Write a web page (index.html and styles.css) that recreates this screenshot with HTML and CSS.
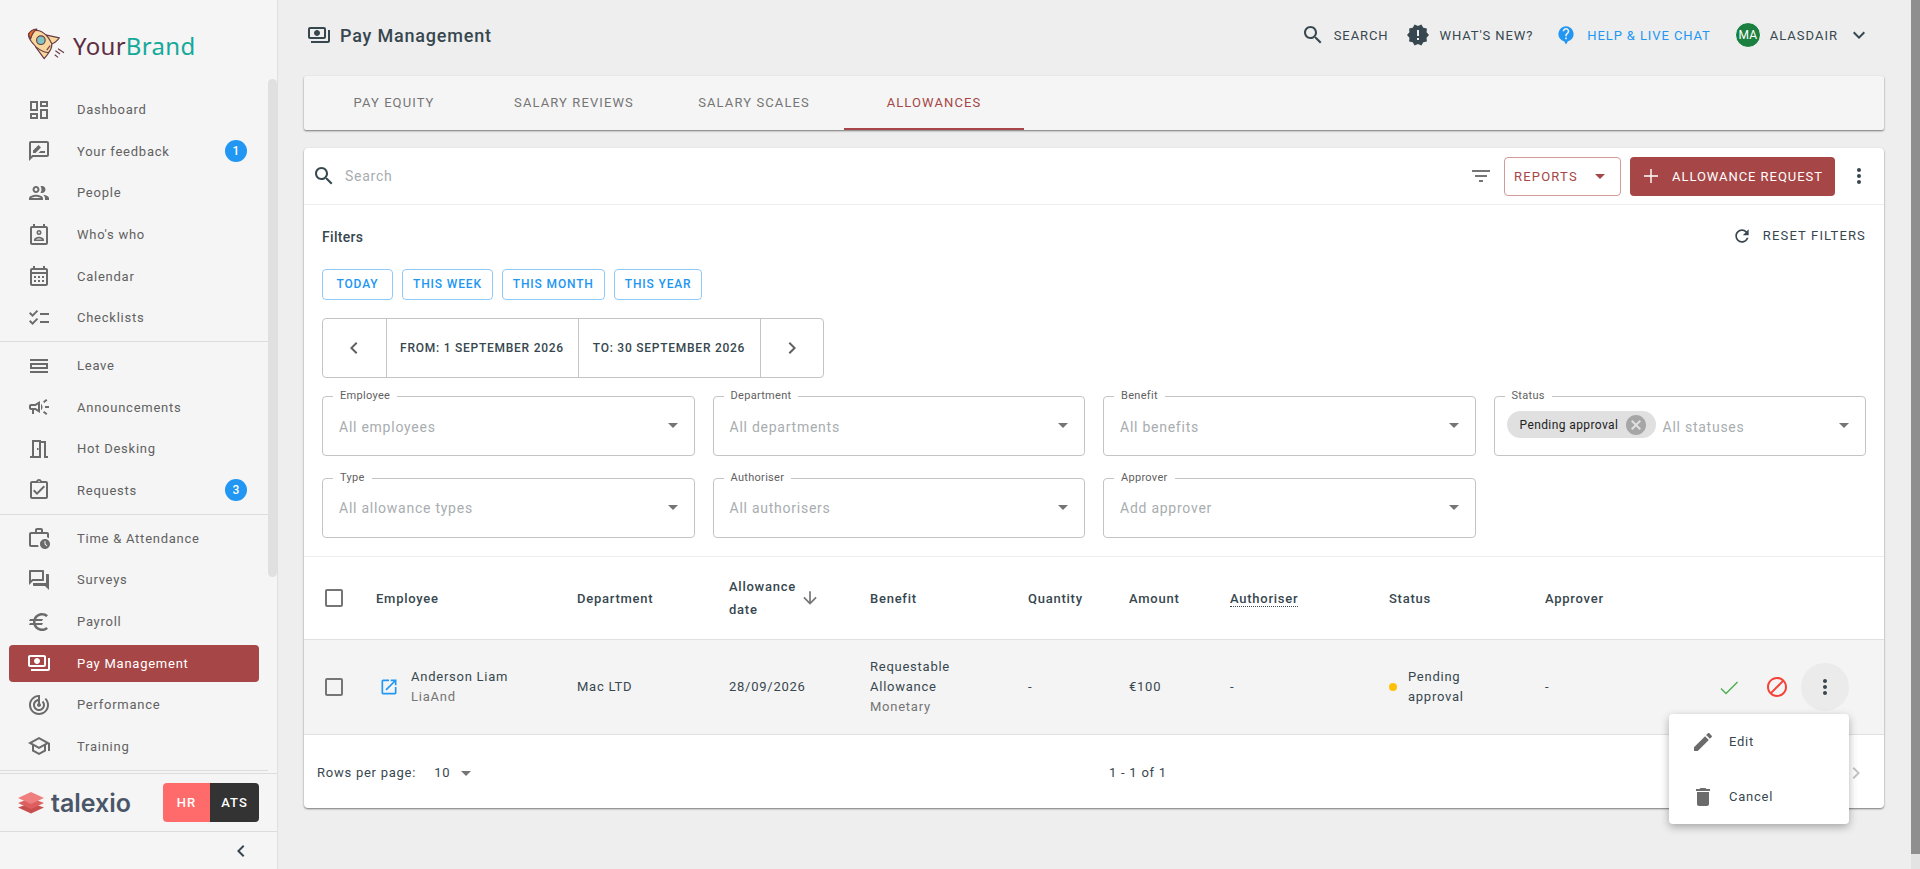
FILE: index.html
```html
<!DOCTYPE html>
<html lang="en">
<head>
    <meta charset="UTF-8">
    <meta name="viewport" content="width=device-width, initial-scale=1.0">
    <title>Pay Management</title>
    <link rel="stylesheet" href="styles.css">
</head>
<body>
    <svg class="sprite" xmlns="http://www.w3.org/2000/svg">
        <symbol id="i-dashboard" viewBox="0 0 24 24"><path d="M19 5v2h-4V5h4M9 5v6H5V5h4m10 8v6h-4v-6h4M9 17v2H5v-2h4M21 3h-8v6h8V3zM11 3H3v10h8V3zm10 8h-8v10h8V11zm-10 4H3v6h8v-6z"/></symbol>
        <symbol id="i-feedback" viewBox="0 0 24 24"><path d="M20 2H4c-1.1 0-2 .9-2 2v18l4-4h14c1.1 0 2-.9 2-2V4c0-1.100-.9-2-2-2zm0 14H5.170L4 17.170V4h16v12z"/><path d="M6 14h2.500l5.500-5.500-2.500-2.500-5.500 5.500V14zM11.500 14H18v-2h-4.500z"/></symbol>
        <symbol id="i-people" viewBox="0 0 24 24"><path d="M9 13.750c-2.340 0-7 1.170-7 3.500V19h14v-1.750c0-2.330-4.660-3.500-7-3.500zM4.340 17c.84-.58 2.870-1.250 4.660-1.250s3.820.67 4.660 1.250H4.340zM9 12c1.930 0 3.500-1.570 3.500-3.500S10.930 5 9 5 5.500 6.570 5.500 8.500 7.070 12 9 12zm0-5c.83 0 1.500.67 1.500 1.500S9.830 10 9 10s-1.500-.67-1.500-1.500S8.170 7 9 7zm7.040 6.810c1.160.84 1.960 1.960 1.960 3.440V19h4v-1.750c0-2.020-3.500-3.170-5.960-3.440zM15 12c1.930 0 3.500-1.570 3.500-3.500S16.930 5 15 5c-.54 0-1.040.13-1.500.35.63.89 1 1.980 1 3.150s-.37 2.260-1 3.150c.46.22.96.35 1.500.35z"/></symbol>
        <symbol id="i-whos" viewBox="0 0 24 24"><path d="M19 3h-1V1h-2v2H8V1H6v2H5c-1.100 0-2 .9-2 2v15c0 1.100.9 2 2 2h14c1.100 0 2-.9 2-2V5c0-1.100-.9-2-2-2zm0 17H5V5h14v15z"/><path d="M12 7a2.500 2.500 0 1 0 0 5 2.500 2.500 0 0 0 0-5zm0 3.400a.9.9 0 1 1 0-1.800.9.9 0 0 1 0 1.800zM7 18h10v-1.300c0-1.900-3.300-2.900-5-2.900s-5 1-5 2.900V18zm2-1.600c.6-.6 2-1 3-1s2.400.4 3 1H9z"/></symbol>
        <symbol id="i-calendar" viewBox="0 0 24 24"><path d="M19 4h-1V2h-2v2H8V2H6v2H5c-1.100 0-2 .9-2 2v14c0 1.100.9 2 2 2h14c1.100 0 2-.9 2-2V6c0-1.100-.9-2-2-2zm0 16H5V10h14v10zM5 8V6h14v2H5z"/><path d="M7 12h2v2H7zM11 12h2v2h-2zM15 12h2v2h-2zM7 16h2v2H7zM11 16h2v2h-2zM15 16h2v2h-2z"/></symbol>
        <symbol id="i-checklist" viewBox="0 0 24 24"><path d="M22 7h-9v2h9V7zm0 8h-9v2h9v-2zM5.540 11L2 7.460l1.410-1.410 2.120 2.120 4.240-4.240 1.410 1.410L5.540 11zm0 8L2 15.460l1.410-1.410 2.120 2.120 4.240-4.240 1.410 1.410L5.540 19z"/></symbol>
        <symbol id="i-leave" viewBox="0 0 24 24"><path d="M3 5h18v2H3zM3 17h18v2H3zM3 9h18v6H3zm2 2v2h14v-2z" fill-rule="evenodd"/></symbol>
        <symbol id="i-campaign" viewBox="0 0 24 24"><path d="M18 11v2h4v-2h-4zm-2 6.610c.96.71 2.210 1.650 3.200 2.390.4-.53.8-1.070 1.200-1.600-.99-.74-2.240-1.680-3.200-2.400-.4.54-.8 1.080-1.200 1.610zM20.400 5.600c-.4-.53-.8-1.070-1.200-1.600-.99.74-2.240 1.680-3.200 2.400.4.53.8 1.070 1.200 1.600.96-.72 2.210-1.650 3.200-2.400zM4 9c-1.100 0-2 .9-2 2v2c0 1.100.9 2 2 2h1v4h2v-4h1l5 3V6L8 9H4zm5.030 1.710L11 9.530v4.940l-1.970-1.180-.48-.29H4v-2h4.550l.48-.29zM15.500 12c0-1.330-.58-2.530-1.500-3.350v6.690c.92-.81 1.500-2.010 1.500-3.340z"/></symbol>
        <symbol id="i-door" viewBox="0 0 24 24"><path d="M14 6v15H3v-2h2V3h9v1h5v15h2v2h-4V6h-3zM7 5v14h5V5H7zm3 6h1.500v2H10z" fill-rule="evenodd"/></symbol>
        <symbol id="i-requests" viewBox="0 0 24 24"><path d="M18 9l-1.410-1.420L10 14.170l-2.590-2.580L6 13l4 4zm1-6h-4.180C14.400 1.840 13.300 1 12 1c-1.300 0-2.400.84-2.820 2H5c-1.100 0-2 .9-2 2v14c0 1.100.9 2 2 2h14c1.100 0 2-.9 2-2V5c0-1.100-.9-2-2-2zm-7-.25c.41 0 .75.34.75.75s-.34.75-.75.75-.75-.34-.75-.75.34-.75.75-.75zM19 19H5V5h14v14z"/></symbol>
        <symbol id="i-time" viewBox="0 0 24 24"><path d="M4 19V8h16v3.290c.72.22 1.400.54 2 .97V8c0-1.110-.89-2-2-2h-4V4c0-1.110-.89-2-2-2h-4c-1.110 0-2 .89-2 2v2H4c-1.110 0-1.990.89-1.990 2L2 19c0 1.110.89 2 2 2h7.680c-.3-.62-.5-1.290-.6-2H4zm6-15h4v2h-4V4z"/><path d="M18 13c-2.760 0-5 2.240-5 5s2.240 5 5 5 5-2.240 5-5-2.240-5-5-5zm1.650 7.350L17.500 18.200V15h1v2.790l1.850 1.850-.7.71z"/></symbol>
        <symbol id="i-forum" viewBox="0 0 24 24"><path d="M15 4v7H5.170L4 12.170V4h11m1-2H3c-.55 0-1 .45-1 1v14l4-4h10c.55 0 1-.45 1-1V3c0-.55-.45-1-1-1zm5 4h-2v9H6v2c0 .55.45 1 1 1h11l4 4V7c0-.55-.45-1-1-1z"/></symbol>
        <symbol id="i-euro" viewBox="0 0 24 24"><path d="M15 18.500c-2.510 0-4.680-1.420-5.760-3.500H15l1-2H8.580c-.05-.33-.08-.66-.08-1s.03-.67.08-1H15l1-2H9.240C10.320 6.920 12.500 5.500 15 5.500c1.610 0 3.090.59 4.230 1.570L21 5.300C19.410 3.870 17.300 3 15 3c-3.920 0-7.240 2.510-8.480 6H3l-1 2h4.060c-.04.33-.06.66-.06 1s.02.67.06 1H3l-1 2h4.520c1.240 3.490 4.560 6 8.480 6 2.310 0 4.410-.87 6-2.300l-1.780-1.770c-1.130.98-2.600 1.570-4.220 1.570z"/></symbol>
        <symbol id="i-payments" viewBox="0 0 24 24"><path d="M19 14V6c0-1.100-.9-2-2-2H3c-1.100 0-2 .9-2 2v8c0 1.100.9 2 2 2h14c1.100 0 2-.9 2-2zm-2 0H3V6h14v8zm-7-7c-1.660 0-3 1.340-3 3s1.340 3 3 3 3-1.340 3-3-1.340-3-3-3zm13 0v11c0 1.100-.9 2-2 2H4v-2h17V7h2z"/></symbol>
        <symbol id="i-track" viewBox="0 0 24 24"><path d="M19.070 4.930l-1.410 1.410C19.100 7.790 20 9.790 20 12c0 4.420-3.580 8-8 8s-8-3.580-8-8c0-4.080 3.050-7.440 7-7.930v2.020C8.160 6.570 6 9.030 6 12c0 3.310 2.690 6 6 6s6-2.690 6-6c0-1.660-.67-3.160-1.760-4.240l-1.410 1.410C15.550 9.900 16 10.890 16 12c0 2.210-1.790 4-4 4s-4-1.790-4-4c0-1.860 1.280-3.410 3-3.860v2.140c-.6.35-1 .98-1 1.720 0 1.100.9 2 2 2s2-.9 2-2c0-.74-.4-1.380-1-1.720V2h-1C6.480 2 2 6.480 2 12s4.480 10 10 10 10-4.480 10-10c0-2.760-1.120-5.260-2.930-7.070z"/></symbol>
        <symbol id="i-school" viewBox="0 0 24 24"><path d="M12 3L1 9l4 2.180v6L12 21l7-3.820v-6l2-1.090V17h2V9L12 3zm6.820 6L12 12.720 5.180 9 12 5.280 18.820 9zM17 15.990l-5 2.730-5-2.730v-3.720L12 15l5-2.730v3.720z"/></symbol>
        <symbol id="i-search" viewBox="0 0 24 24"><path d="M15.500 14h-.79l-.28-.27C15.410 12.590 16 11.110 16 9.500 16 5.910 13.090 3 9.500 3S3 5.910 3 9.500 5.910 16 9.500 16c1.610 0 3.090-.59 4.230-1.570l.27.28v.79l5 4.990L20.490 19l-4.990-5zm-6 0C7.010 14 5 11.990 5 9.500S7.010 5 9.500 5 14 7.010 14 9.500 11.990 14 9.500 14z"/></symbol>
        <symbol id="i-new" viewBox="0 0 24 24"><path d="M23 12l-2.440-2.780.34-3.680-3.610-.82-1.890-3.180L12 3 8.600 1.540 6.710 4.720l-3.610.81.34 3.680L1 12l2.440 2.780-.34 3.690 3.610.82 1.890 3.180L12 21l3.400 1.460 1.890-3.180 3.610-.82-.34-3.680L23 12zm-10 5h-2v-2h2v2zm0-4h-2V7h2v6z"/></symbol>
        <symbol id="i-help" viewBox="0 0 24 24"><path d="M12 1.500a9.200 9.200 0 0 0-2.300 18.100L12 23.500l2.300-3.900A9.200 9.200 0 0 0 12 1.500z"/><path fill="#eeeeee" d="M13 17h-2v-2h2v2zm2.070-7.250l-.9.920C13.450 11.400 13 12 13 13.500h-2V13c0-1.100.45-2.100 1.170-2.830l1.240-1.260c.37-.36.59-.86.59-1.410 0-1.100-.9-2-2-2s-2 .9-2 2H8c0-2.210 1.790-4 4-4s4 1.790 4 4c0 .88-.36 1.680-.93 2.250z"/></symbol>
        <symbol id="i-filter" viewBox="0 0 24 24"><path d="M10 18h4v-2h-4v2zM3 6v2h18V6H3zm3 7h12v-2H6v2z"/></symbol>
        <symbol id="i-refresh" viewBox="0 0 24 24"><path d="M17.650 6.350C16.200 4.900 14.210 4 12 4c-4.420 0-7.990 3.580-7.990 8s3.570 8 7.990 8c3.730 0 6.840-2.550 7.730-6h-2.080c-.82 2.330-3.040 4-5.650 4-3.310 0-6-2.690-6-6s2.690-6 6-6c1.660 0 3.140.69 4.220 1.780L13 11h7V4l-2.350 2.350z"/></symbol>
        <symbol id="i-more" viewBox="0 0 24 24"><path d="M12 8c1.100 0 2-.9 2-2s-.9-2-2-2-2 .9-2 2 .9 2 2 2zm0 2c-1.100 0-2 .9-2 2s.9 2 2 2 2-.9 2-2-.9-2-2-2zm0 6c-1.100 0-2 .9-2 2s.9 2 2 2 2-.9 2-2-.9-2-2-2z"/></symbol>
        <symbol id="i-plus" viewBox="0 0 24 24"><path d="M19 12.700h-6.300V19h-1.400v-6.300H5v-1.400h6.300V5h1.400v6.300H19z"/></symbol>
        <symbol id="i-caret" viewBox="0 0 24 24"><path d="M7 10l5 5 5-5z"/></symbol>
        <symbol id="i-left" viewBox="0 0 24 24"><path d="M15.410 7.410L14 6l-6 6 6 6 1.410-1.410L10.830 12z"/></symbol>
        <symbol id="i-right" viewBox="0 0 24 24"><path d="M10 6L8.590 7.410 13.170 12l-4.580 4.580L10 18l6-6z"/></symbol>
        <symbol id="i-expand" viewBox="0 0 24 24"><path d="M16.590 8.590L12 13.170 7.410 8.590 6 10l6 6 6-6z"/></symbol>
        <symbol id="i-cancel" viewBox="0 0 24 24"><path d="M12 2C6.470 2 2 6.470 2 12s4.470 10 10 10 10-4.470 10-10S17.530 2 12 2zm5 13.590L15.590 17 12 13.410 8.410 17 7 15.590 10.590 12 7 8.410 8.410 7 12 10.590 15.590 7 17 8.410 13.410 12 17 15.590z"/></symbol>
        <symbol id="i-box" viewBox="0 0 24 24"><path d="M19 5v14H5V5h14m0-2H5c-1.100 0-2 .9-2 2v14c0 1.100.9 2 2 2h14c1.100 0 2-.9 2-2V5c0-1.100-.9-2-2-2z"/></symbol>
        <symbol id="i-down" viewBox="0 0 24 24"><path d="M20 12l-1.410-1.410L13 16.170V4h-2v12.170l-5.580-5.590L4 12l8 8 8-8z"/></symbol>
        <symbol id="i-open" viewBox="0 0 24 24"><path d="M19 19H5V5h7V3H5c-1.110 0-2 .9-2 2v14c0 1.100.89 2 2 2h14c1.100 0 2-.9 2-2v-7h-2v7zM14 3v2h3.590l-9.830 9.830 1.410 1.410L19 6.410V10h2V3h-7z"/></symbol>
        <symbol id="i-check" viewBox="0 0 24 24"><path d="M9 17.500L4.500 13l-1 1L9 19.500 21 7.500l-1-1z"/></symbol>
        <symbol id="i-block" viewBox="0 0 24 24"><path d="M12 2C6.480 2 2 6.480 2 12s4.480 10 10 10 10-4.480 10-10S17.520 2 12 2zM4 12c0-4.420 3.580-8 8-8 1.850 0 3.550.63 4.900 1.690L5.690 16.900C4.630 15.550 4 13.850 4 12zm8 8c-1.850 0-3.550-.63-4.900-1.690L18.310 7.100C19.370 8.450 20 10.150 20 12c0 4.420-3.580 8-8 8z"/></symbol>
        <symbol id="i-edit" viewBox="0 0 24 24"><path d="M3 17.250V21h3.750L17.810 9.940l-3.750-3.750L3 17.250zM20.710 7.040c.39-.39.39-1.020 0-1.410l-2.340-2.340c-.39-.39-1.020-.39-1.410 0l-1.830 1.830 3.750 3.750 1.830-1.830z"/></symbol>
        <symbol id="i-delete" viewBox="0 0 24 24"><path d="M6 19c0 1.100.9 2 2 2h8c1.100 0 2-.9 2-2V7H6v12zM19 4h-3.500l-1-1h-5l-1 1H5v2h14V4z"/></symbol>
    </svg>

    <aside class="sidebar">
        <div class="brand">
            <svg class="rocket" viewBox="20 15 115 100">
                <g stroke="#6a3a45" stroke-width="3.500" stroke-linejoin="round">
                    <path d="M76 36 L118 45 C110 55 102 62 92 64z" fill="#f7d79b"/>
                    <path d="M46 72 L72 108 C78 100 84 96 86 88z" fill="#f7d79b"/>
                    <path d="M25 32 C45 12 70 25 85 45 L95 62 C96 74 92 82 85 90 C70 88 50 78 38 62 C28 50 22 40 25 32z" fill="#f7d79b"/>
                    <path d="M25 34 C28 25 38 19 50 18 C40 25 34 35 31 48 C27 42 25 38 25 34z" fill="#f36f1e"/>
                    <circle cx="62" cy="52" r="13" fill="#7fc4c0"/>
                    <path d="M80 82 L90 68" fill="none"/>
                    <path d="M106 84 L120 94 M114 78 L132 90 M104 96 L114 104" fill="none"/>
                </g>
            </svg>
            <span class="brand-name"><span class="brand-your">Your</span><span class="brand-rest">Brand</span></span>
        </div>

        <nav class="nav">
            <ul class="nav-group">
                <li class="nav-item"><svg class="icon"><use href="#i-dashboard"/></svg>Dashboard</li>
                <li class="nav-item"><svg class="icon"><use href="#i-feedback"/></svg>Your feedback<span class="badge">1</span></li>
                <li class="nav-item"><svg class="icon"><use href="#i-people"/></svg>People</li>
                <li class="nav-item"><svg class="icon"><use href="#i-whos"/></svg>Who's who</li>
                <li class="nav-item"><svg class="icon"><use href="#i-calendar"/></svg>Calendar</li>
                <li class="nav-item"><svg class="icon"><use href="#i-checklist"/></svg>Checklists</li>
            </ul>
            <ul class="nav-group">
                <li class="nav-item"><svg class="icon"><use href="#i-leave"/></svg>Leave</li>
                <li class="nav-item"><svg class="icon"><use href="#i-campaign"/></svg>Announcements</li>
                <li class="nav-item"><svg class="icon"><use href="#i-door"/></svg>Hot Desking</li>
                <li class="nav-item"><svg class="icon"><use href="#i-requests"/></svg>Requests<span class="badge">3</span></li>
            </ul>
            <ul class="nav-group">
                <li class="nav-item"><svg class="icon"><use href="#i-time"/></svg>Time &amp; Attendance</li>
                <li class="nav-item"><svg class="icon"><use href="#i-forum"/></svg>Surveys</li>
                <li class="nav-item"><svg class="icon"><use href="#i-euro"/></svg>Payroll</li>
                <li class="nav-item active"><svg class="icon"><use href="#i-payments"/></svg>Pay Management</li>
                <li class="nav-item"><svg class="icon"><use href="#i-track"/></svg>Performance</li>
                <li class="nav-item"><svg class="icon"><use href="#i-school"/></svg>Training</li>
            </ul>
        </nav>
        <div class="nav-thumb"></div>

        <div class="product">
            <div class="talexio">
                <svg class="talexio-mark" viewBox="0 0 26 22">
                    <path d="M13 11 L26 15.500 L13 21.500 L0 15.500z" fill="#c94f4f"/>
                    <path d="M13 6 L26 11 L13 17 L0 11z" fill="#dd5f5f"/>
                    <path d="M13 0 L26 6 L13 12 L0 6z" fill="#ef7f7f"/>
                </svg>
                <span class="talexio-name">talexio</span>
            </div>
            <div class="switch">
                <span class="switch-hr">HR</span>
                <span class="switch-ats">ATS</span>
            </div>
        </div>
        <div class="collapse"><svg class="icon-sm"><use href="#i-left"/></svg></div>
    </aside>

    <main class="main">
        <header class="topbar">
            <div class="page-title"><svg class="title-icon"><use href="#i-payments"/></svg>Pay Management</div>
            <div class="top-actions">
                <span class="top-link"><svg class="top-icon"><use href="#i-search"/></svg>SEARCH</span>
                <span class="top-link whats-new"><svg class="top-icon"><use href="#i-new"/></svg>WHAT'S NEW?</span>
                <span class="top-link help"><svg class="top-icon"><use href="#i-help"/></svg>HELP &amp; LIVE CHAT</span>
                <span class="top-link user"><span class="avatar">MA</span>ALASDAIR<svg class="top-icon"><use href="#i-expand"/></svg></span>
            </div>
        </header>

        <div class="tabs">
            <div class="tab">PAY EQUITY</div>
            <div class="tab">SALARY REVIEWS</div>
            <div class="tab">SALARY SCALES</div>
            <div class="tab selected">ALLOWANCES</div>
        </div>

        <section class="card">
            <div class="toolbar">
                <svg class="toolbar-search"><use href="#i-search"/></svg>
                <span class="search-text">Search</span>
                <svg class="toolbar-filter"><use href="#i-filter"/></svg>
                <button class="btn-reports">REPORTS<svg class="icon-sm"><use href="#i-caret"/></svg></button>
                <button class="btn-primary"><svg class="icon-sm"><use href="#i-plus"/></svg>ALLOWANCE REQUEST</button>
                <svg class="toolbar-more"><use href="#i-more"/></svg>
            </div>

            <div class="filters">
                <div class="filters-head">
                    <span class="filters-title">Filters</span>
                    <span class="reset"><svg class="reset-icon"><use href="#i-refresh"/></svg>RESET FILTERS</span>
                </div>
                <div class="quick">
                    <button class="quick-btn">TODAY</button>
                    <button class="quick-btn">THIS WEEK</button>
                    <button class="quick-btn">THIS MONTH</button>
                    <button class="quick-btn">THIS YEAR</button>
                </div>
                <div class="range">
                    <div class="range-nav"><svg class="icon-sm"><use href="#i-left"/></svg></div>
                    <div class="range-from">FROM: 1 SEPTEMBER 2026</div>
                    <div class="range-to">TO: 30 SEPTEMBER 2026</div>
                    <div class="range-nav"><svg class="icon-sm"><use href="#i-right"/></svg></div>
                </div>
                <div class="selects">
                    <div class="select"><label>Employee</label><span class="placeholder">All employees</span><svg class="caret"><use href="#i-caret"/></svg></div>
                    <div class="select"><label>Department</label><span class="placeholder">All departments</span><svg class="caret"><use href="#i-caret"/></svg></div>
                    <div class="select"><label>Benefit</label><span class="placeholder">All benefits</span><svg class="caret"><use href="#i-caret"/></svg></div>
                    <div class="select with-chip"><label>Status</label><span class="chip">Pending approval<svg class="chip-x"><use href="#i-cancel"/></svg></span><span class="placeholder">All statuses</span><svg class="caret"><use href="#i-caret"/></svg></div>
                    <div class="select"><label>Type</label><span class="placeholder">All allowance types</span><svg class="caret"><use href="#i-caret"/></svg></div>
                    <div class="select"><label>Authoriser</label><span class="placeholder">All authorisers</span><svg class="caret"><use href="#i-caret"/></svg></div>
                    <div class="select"><label>Approver</label><span class="placeholder">Add approver</span><svg class="caret"><use href="#i-caret"/></svg></div>
                </div>
            </div>

            <div class="table-head">
                <div class="cell-check"><svg class="checkbox"><use href="#i-box"/></svg></div>
                <div>Employee</div>
                <div>Department</div>
                <div class="sort"><span>Allowance date</span><svg class="sort-icon"><use href="#i-down"/></svg></div>
                <div>Benefit</div>
                <div>Quantity</div>
                <div>Amount</div>
                <div><span class="dotted">Authoriser</span></div>
                <div>Status</div>
                <div>Approver</div>
                <div></div>
            </div>
            <div class="table-row">
                <div class="cell-check"><svg class="checkbox"><use href="#i-box"/></svg></div>
                <div class="employee">
                    <svg class="open-icon"><use href="#i-open"/></svg>
                    <div><div>Anderson Liam</div><div class="muted">LiaAnd</div></div>
                </div>
                <div>Mac LTD</div>
                <div>28/09/2026</div>
                <div class="benefit">Requestable Allowance<div class="muted">Monetary</div></div>
                <div>-</div>
                <div>€100</div>
                <div>-</div>
                <div class="status"><span class="dot"></span><span>Pending approval</span></div>
                <div>-</div>
                <div class="row-actions">
                    <span class="act"><svg class="act-icon ok"><use href="#i-check"/></svg></span>
                    <span class="act"><svg class="act-icon no"><use href="#i-block"/></svg></span>
                    <span class="act open"><svg class="act-icon"><use href="#i-more"/></svg></span>
                </div>
            </div>
            <div class="pager">
                <div class="pager-rows">Rows per page:<span class="pager-num">10</span><svg class="caret-static"><use href="#i-caret"/></svg></div>
                <div class="pager-count">1 - 1 of 1</div>
                <svg class="pager-next"><use href="#i-right"/></svg>
            </div>

            <div class="menu">
                <div class="menu-item"><svg class="icon"><use href="#i-edit"/></svg>Edit</div>
                <div class="menu-item"><svg class="icon"><use href="#i-delete"/></svg>Cancel</div>
            </div>
        </section>
    </main>

    <div class="page-scroll"><div class="page-thumb"></div></div>
</body>
</html>
```

FILE: styles.css
```css
* {
    box-sizing: border-box;
}

body {
    margin: 0;
    height: 100vh;
    overflow: hidden;
    display: flex;
    background: #eeeeee;
    font-family: Roboto, "Liberation Sans", sans-serif;
    font-size: 13px;
    letter-spacing: 0.75px;
    color: #37474f;
}

button {
    font-family: inherit;
    letter-spacing: inherit;
    cursor: pointer;
}

.sprite {
    display: none;
}

svg {
    fill: currentColor;
    flex-shrink: 0;
}

/* sidebar */
.sidebar {
    position: relative;
    width: 278px;
    flex-shrink: 0;
    display: flex;
    flex-direction: column;
    background: #f5f5f5;
    border-right: 1px solid #e0e0e0;
}

.brand {
    height: 89px;
    display: flex;
    align-items: center;
    padding-left: 27px;
}

.rocket {
    width: 38px;
    height: 33px;
    margin-right: 8px;
}

.brand-name {
    font-family: "Noto Sans", sans-serif;
    font-size: 24px;
    letter-spacing: 0.3px;
    margin-top: 2px;
}

.brand-your {
    color: #5d2e42;
}

.brand-rest {
    color: #14a99a;
}

.nav {
    width: 268px;
}

.nav-group {
    list-style: none;
    display: flex;
    flex-direction: column;
    gap: 4.6px;
    margin: 0 0 2.6px;
    padding: 2.3px 0 5px;
    border-bottom: 1px solid #dcdcdc;
}

.nav-item {
    height: 37px;
    margin: 0 9px;
    padding: 0 12px 0 18px;
    display: flex;
    align-items: center;
    border-radius: 4px;
    color: #616161;
}

.nav-item .icon {
    margin-right: 26px;
}

.icon {
    width: 24px;
    height: 24px;
    color: #6b6b6b;
}

.nav-item.active {
    background: #a64646;
    color: #ffffff;
}

.nav-item.active .icon {
    color: #ffffff;
}

.badge {
    margin-left: auto;
    width: 22px;
    height: 22px;
    border-radius: 50%;
    background: #2196f3;
    color: #ffffff;
    font-size: 12px;
    font-weight: 500;
    letter-spacing: 0;
    display: flex;
    align-items: center;
    justify-content: center;
}

.nav-thumb {
    position: absolute;
    left: 268px;
    top: 79px;
    width: 9px;
    height: 498px;
    background: #e0e0e0;
    border-radius: 5px;
}

.product {
    height: 59px;
    display: flex;
    align-items: center;
    justify-content: space-between;
    padding: 0 18px;
    border-top: 1px solid #dcdcdc;
    border-bottom: 1px solid #dcdcdc;
}

.talexio {
    display: flex;
    align-items: center;
    gap: 7px;
}

.talexio-mark {
    width: 26px;
    height: 22px;
}

.talexio-name {
    font-family: Inter, sans-serif;
    font-size: 25px;
    font-weight: 600;
    letter-spacing: 0;
    color: #4a5568;
}

.switch {
    display: flex;
    width: 96px;
    height: 39px;
    border-radius: 4px;
    overflow: hidden;
    color: #ffffff;
    font-size: 13px;
    font-weight: 500;
    letter-spacing: 1px;
}

.switch span {
    display: flex;
    align-items: center;
    justify-content: center;
}

.switch-hr {
    width: 47px;
    background: #ff6b6b;
}

.switch-ats {
    flex: 1;
    background: #333333;
}

.collapse {
    flex: 1;
    display: flex;
    align-items: center;
    justify-content: flex-end;
    padding-right: 24px;
    color: #37474f;
}

.icon-sm {
    width: 24px;
    height: 24px;
}

/* main */
.main {
    flex: 1;
    min-width: 0;
    padding: 0 27px 0 26px;
}

.topbar {
    height: 76px;
    display: flex;
    align-items: center;
    justify-content: space-between;
    padding: 0 13px 6px 3px;
}

.page-title {
    display: flex;
    align-items: center;
    font-size: 18px;
    font-weight: 500;
    letter-spacing: 0.8px;
}

.title-icon {
    width: 24px;
    height: 24px;
    margin-right: 9px;
}

.top-actions {
    display: flex;
    align-items: center;
    gap: 20px;
}

.top-link {
    display: flex;
    align-items: center;
    font-size: 13px;
    letter-spacing: 0.9px;
}

.top-icon {
    width: 24px;
    height: 24px;
    margin-right: 9px;
}

.whats-new {
    margin-left: -2px;
}

.help {
    margin-left: 1px;
    color: #2196f3;
}

.help .top-icon {
    width: 20px;
    height: 20px;
    margin: 0 11px 0 2px;
}

.user {
    margin-left: 4px;
    letter-spacing: 1px;
}

.user .top-icon {
    margin: 0 0 0 9px;
}

.avatar {
    width: 26px;
    height: 26px;
    border-radius: 50%;
    border: 1px solid #ffffff;
    background: #1b7f3f;
    color: #ffffff;
    font-size: 12px;
    letter-spacing: 0;
    display: flex;
    align-items: center;
    justify-content: center;
    margin-right: 9px;
}

.tabs {
    height: 54px;
    display: flex;
    background: #f5f5f5;
    border-radius: 2px;
    box-shadow: 0 1px 2px rgba(0, 0, 0, 0.5);
    margin-bottom: 18px;
}

.tab {
    width: 180px;
    display: flex;
    align-items: center;
    justify-content: center;
    padding-bottom: 2px;
    color: #757575;
    font-size: 13px;
    letter-spacing: 1.1px;
}

.tab.selected {
    color: #a64646;
    border-bottom: 2px solid #a64646;
    padding-bottom: 0;
}

.card {
    position: relative;
    height: 660px;
    background: #ffffff;
    border-radius: 4px;
    box-shadow: 0 1px 2px rgba(0, 0, 0, 0.5);
}

.toolbar {
    height: 57px;
    display: flex;
    align-items: center;
    padding: 0 13px 0 8px;
    border-bottom: 1px solid #eeeeee;
}

.toolbar-search {
    width: 24px;
    height: 24px;
    margin-right: 9px;
}

.search-text {
    color: #a8adb0;
    font-size: 14px;
}

.toolbar-filter {
    width: 24px;
    height: 24px;
    margin-left: auto;
    margin-right: 11px;
    color: #757575;
}

.btn-reports {
    width: 117px;
    height: 39px;
    display: flex;
    align-items: center;
    justify-content: space-between;
    padding: 0 8px 0 9px;
    background: #ffffff;
    border: 1px solid #d39a9a;
    border-radius: 4px;
    color: #a64646;
    font-size: 13px;
    letter-spacing: 1.2px;
}

.btn-primary {
    width: 205px;
    height: 39px;
    margin-left: 9px;
    display: flex;
    align-items: center;
    padding: 0;
    background: #a64646;
    border: none;
    border-radius: 4px;
    color: #ffffff;
    font-size: 13px;
    letter-spacing: 0.95px;
}

.btn-primary svg {
    margin: 0 9px 0 9px;
}

.toolbar-more {
    width: 24px;
    height: 24px;
    margin-left: 12px;
}

.filters {
    padding: 0 18px;
    border-bottom: 1px solid #eeeeee;
    height: 352px;
}

.filters-head {
    height: 64px;
    display: flex;
    align-items: center;
    justify-content: space-between;
}

.filters-title {
    font-size: 14px;
    font-weight: 500;
    letter-spacing: 0.3px;
}

.reset {
    display: flex;
    align-items: center;
    margin-top: -3px;
    font-size: 13px;
    letter-spacing: 1.15px;
}

.reset-icon {
    width: 20px;
    height: 20px;
    margin-right: 11px;
}

.quick {
    display: flex;
    gap: 9px;
}

.quick-btn {
    height: 31px;
    min-width: 71px;
    padding: 0 10px 1px;
    background: #ffffff;
    border: 1px solid #90caf9;
    border-radius: 4px;
    color: #2196f3;
    font-size: 12px;
    font-weight: 500;
    letter-spacing: 0.85px;
}

.range {
    display: flex;
    width: 502px;
    height: 60px;
    margin-top: 18px;
    border: 1px solid #c4c4c4;
    border-radius: 4px;
    font-size: 12px;
    font-weight: 500;
}

.range > div {
    display: flex;
    align-items: center;
    justify-content: center;
}

.range-nav {
    flex: 1;
    color: #616161;
}

.range-from {
    width: 193px;
    border-left: 1px solid #c4c4c4;
    border-right: 1px solid #c4c4c4;
}

.range-to {
    width: 182px;
    border-right: 1px solid #c4c4c4;
}

.selects {
    display: grid;
    grid-template-columns: repeat(4, 1fr);
    grid-template-rows: 60px 60px;
    gap: 22px 18px;
    margin-top: 18px;
}

.select {
    position: relative;
    display: flex;
    align-items: center;
    padding: 0 14px 0 16px;
    border: 1px solid #c4c4c4;
    border-radius: 4px;
}

.select label {
    position: absolute;
    left: 10px;
    top: -8px;
    padding: 0 7px;
    background: #ffffff;
    color: #616161;
    font-size: 11px;
    line-height: 13px;
    letter-spacing: 0.3px;
}

.placeholder {
    color: #a8adb0;
    font-size: 14px;
    margin-top: 2px;
}

.select:nth-child(n+5) .placeholder {
    margin-top: 0;
}

.caret {
    position: absolute;
    right: 9px;
    top: 16px;
    width: 24px;
    height: 24px;
    color: #757575;
}

.with-chip {
    padding-left: 12px;
}

.chip {
    display: flex;
    align-items: center;
    height: 27px;
    width: 149px;
    margin-right: 7px;
    padding-left: 13px;
    margin-top: -3px;
    border-radius: 14px;
    background: #e0e0e0;
    color: #222222;
    font-size: 12px;
    letter-spacing: 0.4px;
}

.chip-x {
    width: 24px;
    height: 24px;
    margin-left: 6px;
    color: #a6a6a6;
}

.table-head,
.table-row {
    display: grid;
    grid-template-columns: 72px 201px 152px 141px 158px 101px 101px 159px 156px 156px 1fr;
    align-items: center;
    font-size: 13px;
}

.table-head {
    height: 83px;
    border-bottom: 1px solid #e0e0e0;
    font-weight: 500;
}

.table-row {
    height: 95px;
    background: #f4f4f4;
    border-bottom: 1px solid #e0e0e0;
    line-height: 20px;
}

.cell-check {
    padding-left: 18px;
    display: flex;
}

.checkbox {
    width: 24px;
    height: 24px;
    color: #757575;
}

.sort {
    display: flex;
    align-items: center;
    line-height: 23px;
}

.sort span {
    width: 71px;
}

.sort-icon {
    width: 20px;
    height: 20px;
    color: #757575;
}

.dotted {
    border-bottom: 1px dotted #37474f;
}

.employee {
    display: flex;
    align-items: center;
    margin-left: 3px;
}

.open-icon {
    width: 20px;
    height: 20px;
    margin-right: 12px;
    color: #2196f3;
}

.benefit {
    width: 100px;
}

.muted {
    color: #757575;
}

.status {
    display: flex;
    align-items: center;
}

.status span:last-child {
    width: 70px;
}

.dot {
    width: 8px;
    height: 8px;
    border-radius: 50%;
    background: #ffc107;
    margin-right: 11px;
}

.row-actions {
    display: flex;
    justify-content: flex-end;
    padding-right: 35px;
}

.act {
    width: 48px;
    height: 48px;
    display: flex;
    align-items: center;
    justify-content: center;
}

.act-icon {
    width: 24px;
    height: 24px;
}

.act.open {
    background: #ebebeb;
    border-radius: 50%;
}

.ok {
    color: #4caf50;
}

.no {
    color: #f44336;
}

.pager {
    position: relative;
    height: 74px;
    display: flex;
    align-items: center;
    padding: 1px 0 0 13px;
    font-size: 13px;
}

.pager-rows {
    display: flex;
    align-items: center;
}

.pager-num {
    margin-left: 18px;
}

.caret-static {
    width: 24px;
    height: 24px;
    margin-left: 4px;
    color: #757575;
}

.pager-count {
    position: absolute;
    left: 805px;
}

.pager-next {
    width: 24px;
    height: 24px;
    margin-left: auto;
    margin-right: 16px;
    color: #c4c4c4;
}

.menu {
    position: absolute;
    top: 566px;
    right: 35px;
    width: 180px;
    height: 110px;
    background: #ffffff;
    border-radius: 4px;
    box-shadow: 0 3px 8px rgba(0, 0, 0, 0.3);
}

.menu-item {
    height: 55px;
    display: flex;
    align-items: center;
    padding-left: 22px;
    font-size: 13px;
}

.menu-item .icon {
    margin-right: 14px;
}

.page-scroll {
    width: 9px;
    flex-shrink: 0;
    background: #e3e3e3;
}

.page-thumb {
    height: 854px;
    background: #8f8f8f;
}
```
